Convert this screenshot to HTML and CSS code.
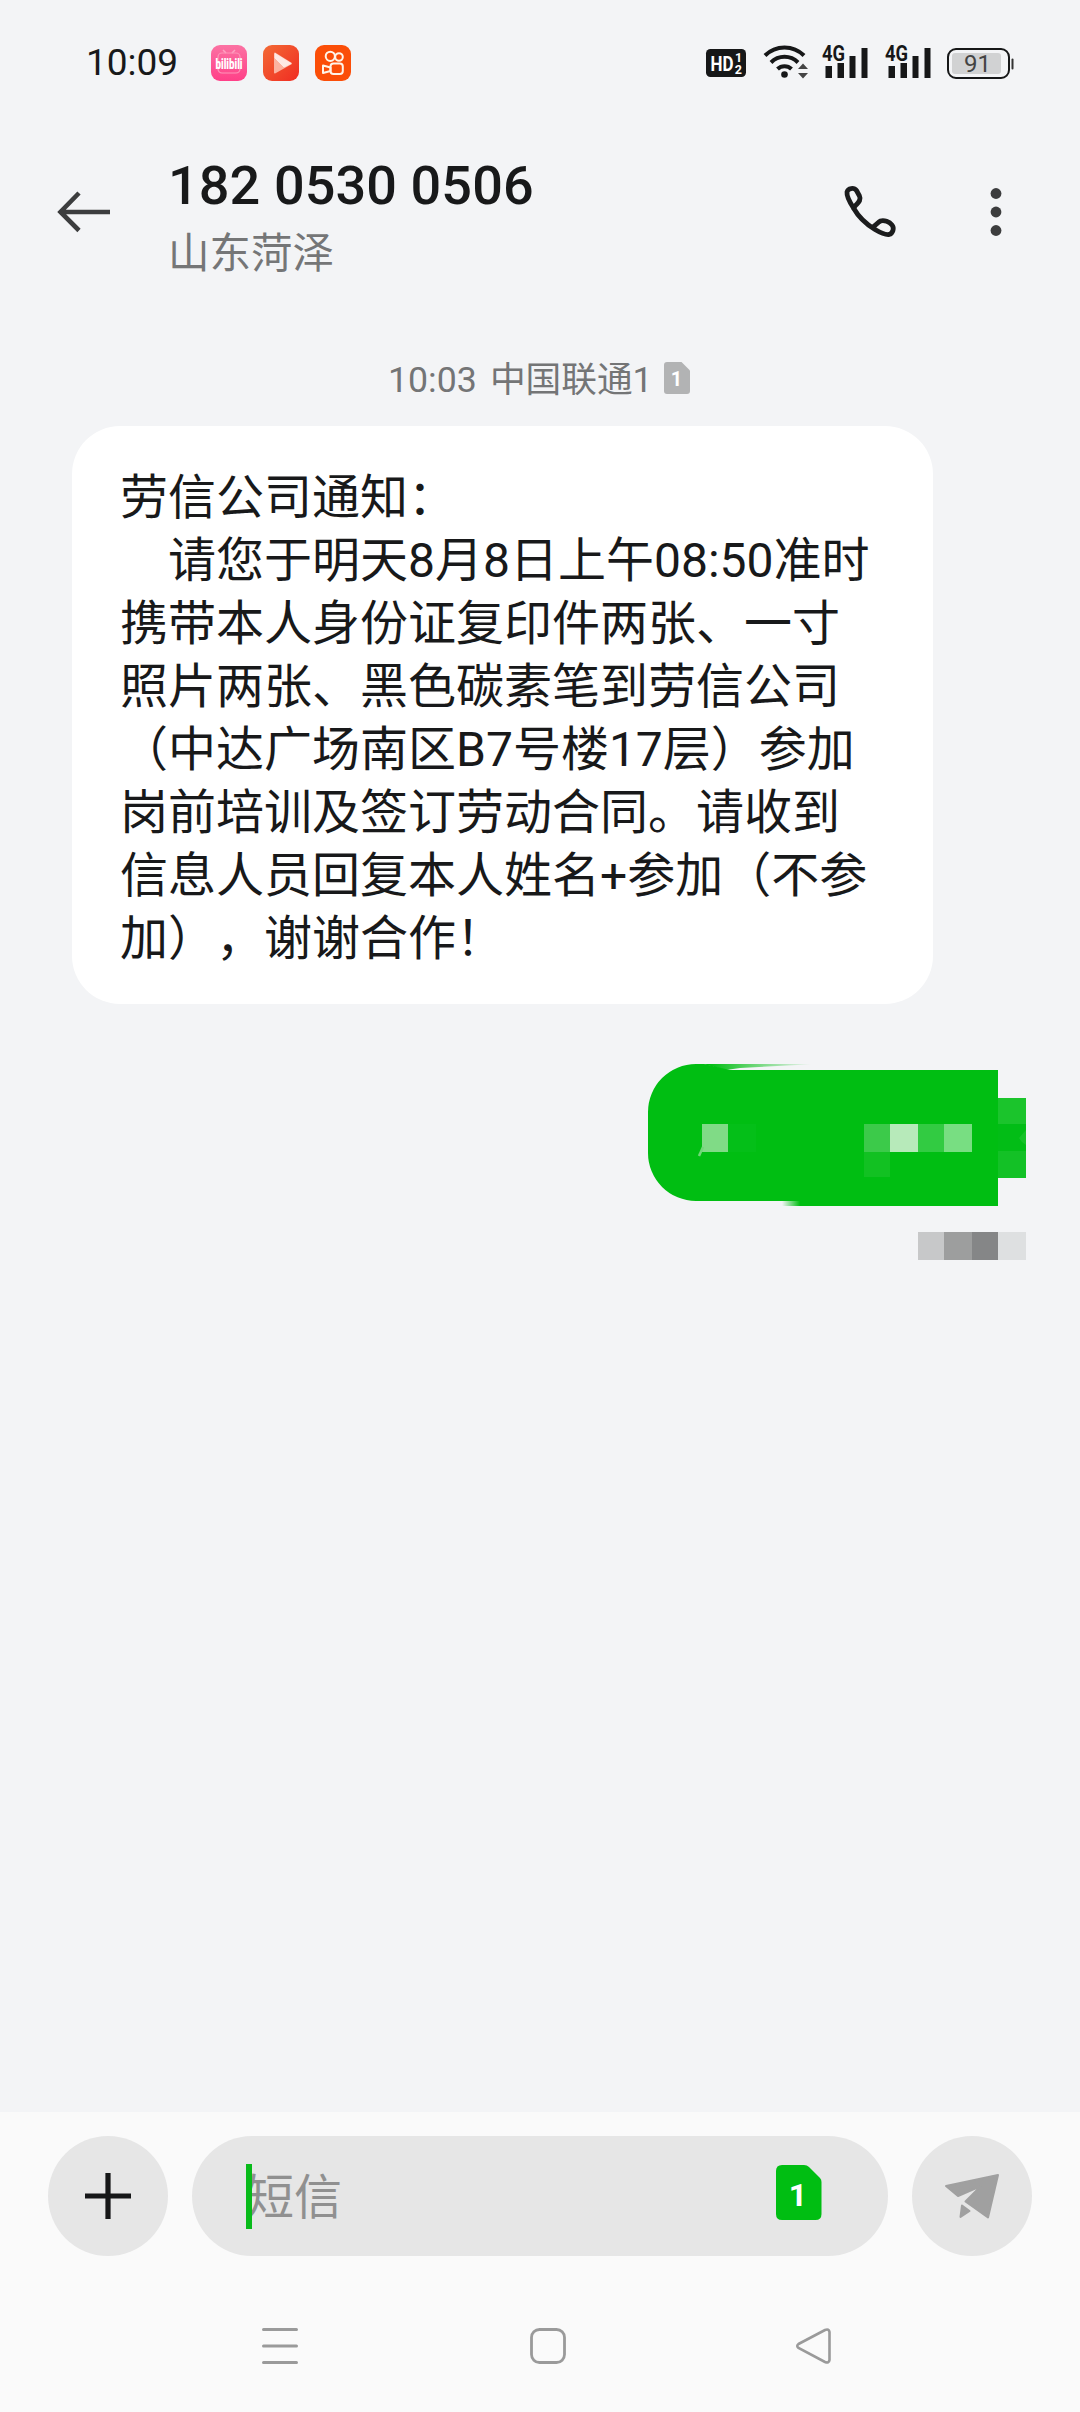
FILE: index.html
```html
<!DOCTYPE html>
<html lang="zh-CN">
<head>
<meta charset="utf-8">
<title>182 0530 0506</title>
<link rel="stylesheet" href="styles.css">
</head>
<body>
<div class="screen">
  <div class="status">
    <span class="clock">10:09</span>
    <div class="apps">
      <svg width="36" height="36" viewBox="0 0 36 36">
        <defs><linearGradient id="pink" x1="0" y1="0" x2="0" y2="1"><stop offset="0" stop-color="#fb72a3"/><stop offset="1" stop-color="#ff4088"/></linearGradient></defs>
        <rect width="36" height="36" rx="9" fill="url(#pink)"/>
        <path d="M12 5l3 3M24 5l-3 3" stroke="#fda3c2" stroke-width="1.5"/>
        <rect x="7" y="8" width="22" height="20" rx="4" fill="none" stroke="#fd94b8" stroke-width="1.2"/>
        <text class="bili" x="18" y="24" textLength="27" lengthAdjust="spacingAndGlyphs">bilibili</text>
      </svg>
      <svg width="36" height="36" viewBox="0 0 36 36">
        <defs><linearGradient id="red" x1="0" y1="0" x2="1" y2="1"><stop offset="0" stop-color="#f36a35"/><stop offset="1" stop-color="#f02c22"/></linearGradient></defs>
        <rect width="36" height="36" rx="9" fill="url(#red)"/>
        <path d="M12 8.500l16 10-16 9z" fill="#fbb3a0" stroke="#fbb3a0" stroke-width="2" stroke-linejoin="round"/>
        <path d="M12 8.500l16 10-7 3.500-9-9z" fill="#fee9e4" stroke="#fee9e4" stroke-width="1" stroke-linejoin="round"/>
      </svg>
      <svg width="36" height="36" viewBox="0 0 36 36">
        <rect width="36" height="36" rx="9" fill="#fb4e08"/>
        <g fill="none" stroke="#fff4e8" stroke-width="2" stroke-linejoin="round"><circle cx="15.300" cy="11.300" r="4.600"/><circle cx="24" cy="12" r="3.800"/><rect x="15.500" y="18.500" width="12.300" height="10.500" rx="3"/><path d="M15.500 22.500l-7.500-2v7.500l7.500-2z"/></g>
      </svg>
    </div>
    <div class="signals">
      <svg width="40" height="28" viewBox="0 0 40 28">
        <rect width="40" height="28" rx="4.500" fill="#161718"/>
        <text class="hd" x="4.500" y="22" textLength="23" lengthAdjust="spacingAndGlyphs">HD</text>
        <text class="hd-n" x="29" y="12.500">1</text><text class="hd-n" x="28.800" y="25.300">2</text>
      </svg>
      <svg class="wifi" width="46" height="35" viewBox="763 44 46 35">
        <g fill="none" stroke="#161718" stroke-width="4"><path d="M765 55.500a27.500 27.500 0 0 1 39 0"/><path d="M771 62.500a19 19 0 0 1 27 0"/><path d="M777.500 69a10 10 0 0 1 14 0"/></g>
        <circle cx="784.500" cy="74.500" r="3.300" fill="#161718"/>
        <path d="M798 69l5-5.500 5 5.500zM798 73h10l-5 5.500z" fill="#444"/>
      </svg>
      <svg class="cell" width="47" height="35" viewBox="0 0 47 35">
        <text class="g4" x="0" y="16.500" textLength="23" lengthAdjust="spacingAndGlyphs">4G</text>
        <path d="M3.500 22h6.500v12h-6.500zM15.500 19h6.500v15h-6.500zM27.500 12h6v22h-6zM39.500 4h6v30h-6z" fill="#161718"/>
      </svg>
      <svg class="cell" width="47" height="35" viewBox="0 0 47 35">
        <text class="g4" x="0" y="16.500" textLength="23" lengthAdjust="spacingAndGlyphs">4G</text>
        <path d="M3.500 22h6.500v12h-6.500zM15.500 19h6.500v15h-6.500zM27.500 12h6v22h-6zM39.500 4h6v30h-6z" fill="#161718"/>
      </svg>
      <svg width="67" height="31" viewBox="0 0 67 31">
        <rect x="1" y="1" width="61" height="29" rx="8" fill="none" stroke="#161718" stroke-width="2"/>
        <rect x="5" y="5" width="49" height="21" rx="3" fill="#d1d2d3"/>
        <rect x="64.500" y="10.500" width="2" height="11" rx="1" fill="#333"/>
        <text class="pct" x="30.500" y="24">91</text>
      </svg>
    </div>
  </div>

  <header class="header">
    <svg width="54" height="40" viewBox="57 192 54 40"><path d="M110 212H61M79 193L60.500 212l18.500 18.500" fill="none" stroke="#3c3d3e" stroke-width="4.600"/></svg>
    <div class="contact">
      <h1 class="number">182 0530 0506</h1>
      <div class="place">山东菏泽</div>
    </div>
    <svg class="phone" width="54" height="54" viewBox="843 185 54 54">
      <g fill="none" stroke="#1b1c1d" stroke-width="4.800" stroke-linejoin="round">
        <path d="M853.500 208C849 201 846.500 196 847 192c1-4 7-4.800 9.500-1.500l3 5.500c2 4-1 6.500-3.500 9z"/>
        <path d="M853.500 208C858 216 866 224 875 229.500c5 3 10 5.500 14 5 4-1 5.500-6.500 3-9.500-2.500-3-8-5.500-11.500-4-2.500 1.200-4 3.500-7 5.500"/>
      </g>
    </svg>
    <svg width="12" height="50" viewBox="990 187 12 50"><g fill="#3c3d3e"><circle cx="996" cy="193.500" r="5.400"/><circle cx="996" cy="212" r="5.400"/><circle cx="996" cy="230.500" r="5.400"/></g></svg>
  </header>

  <main class="thread">
    <div class="stamp">
      <span>10:03</span><span class="carrier">中国联通1</span>
      <svg width="26" height="32" viewBox="0 0 26 32"><path d="M3 0H17.500L26 8.500V29q0 3-3 3H3q-3 0-3-3V3q0-3 3-3z" fill="#b2b3b4"/><text class="sim-sm" x="12.500" y="23.500">1</text></svg>
    </div>
    <div class="bubble">劳信公司通知：<br>　请您于明天8月8日上午08:50准时<br>携带本人身份证复印件两张、一寸<br>照片两张、黑色碳素笔到劳信公司<br>（中达广场南区B7号楼17层）参加<br>岗前培训及签订劳动合同。请收到<br>信息人员回复本人姓名+参加（不参<br>加），谢谢合作！</div>
    <svg class="reply" width="378" height="197" viewBox="648 1064 378 197">
      <defs>
        <linearGradient id="fade" gradientUnits="userSpaceOnUse" x1="710" y1="1070" x2="812" y2="1064"><stop offset="0" stop-color="#00be12"/><stop offset="1" stop-color="#00be12" stop-opacity="0"/></linearGradient>
        <linearGradient id="edge" gradientUnits="userSpaceOnUse" x1="782" y1="0" x2="800" y2="0"><stop offset="0" stop-color="#00be12" stop-opacity="0"/><stop offset="1" stop-color="#00be12"/></linearGradient>
      </defs>
      <path d="M696 1064H704L730 1070H998V1206H800V1201H696A48 48 0 0 1 648 1153V1112A48 48 0 0 1 696 1064z" fill="#00be12"/>
      <path d="M703 1064H818L740 1068 726 1070z" fill="url(#fade)"/>
      <path d="M782 1201h18v5h-18z" fill="url(#edge)"/>
      <g shape-rendering="crispEdges">
        <path d="M998 1098h28v26h-28z" fill="#1bc42c"/><path d="M998 1124h28v27h-28z" fill="#02bd16"/><path d="M998 1151h28v27h-28z" fill="#13c126"/>
        <path d="M702 1124h26v28h-26z" fill="#80db86"/><path d="M728 1124h28v28h-28z" fill="#04bf18"/>
        <path d="M864 1124h26v28h-26z" fill="#3cca4a"/><path d="M890 1124h28v28h-28z" fill="#b7eaba"/><path d="M918 1124h26v28h-26z" fill="#32cb42"/><path d="M944 1124h28v28h-28z" fill="#78de82"/><path d="M864 1152h26v25h-26z" fill="#12c122"/>
        <path d="M918 1232h26v28h-26z" fill="#c7c8c9"/><path d="M944 1232h28v28h-28z" fill="#9d9e9e"/><path d="M972 1232h26v28h-26z" fill="#858687"/><path d="M998 1232h28v28h-28z" fill="#dee0e1"/>
      </g>
      <path d="M703 1147l-4 9" stroke="#70d878" stroke-width="2.500"/>
      <path d="M1026 1130v15q-5-3-7-7z" fill="#16c228"/>
    </svg>
  </main>

  <footer class="footer">
    <div class="composer">
      <div class="round"><svg width="46" height="46" viewBox="0 0 46 46"><path d="M23 0v46M0 23h46" stroke="#161718" stroke-width="5.200"/></svg></div>
      <div class="field">
        <span class="placeholder">短信<i class="caret"></i></span>
        <svg width="46" height="56" viewBox="0 0 46 56"><path d="M6 0H28q3 0 5 2L44 13q1.500 1.500 1.500 4V49q0 6-6 6H6q-6 0-6-6V6q0-6 6-6z" fill="#00be12"/><text class="sim-lg" x="22" y="40.500">1</text></svg>
      </div>
      <div class="round"><svg class="plane" width="56" height="48" viewBox="944 2174 56 48"><g fill="#a0a0a0" stroke="#a0a0a0" stroke-width="2" stroke-linejoin="round"><path d="M998 2176l-52 11 12 10 23-10-15.500 15.500 22.500 16z"/><path d="M962 2206.500l7.500 5.500-9 6z"/></g></svg></div>
    </div>
    <nav class="nav">
      <svg width="36" height="36" viewBox="0 0 36 36"><path d="M1.500 1.500h33M1.500 18h33M1.500 34.500h33" stroke="#9a9a9a" stroke-width="3" stroke-linecap="round"/></svg>
      <svg class="home" width="36" height="36" viewBox="0 0 36 36"><rect x="1.500" y="1.500" width="33" height="33" rx="8" fill="none" stroke="#9a9a9a" stroke-width="2.800"/></svg>
      <svg width="36" height="36" viewBox="0 0 36 36"><path d="M2.500 16L29 2q4-1.500 4.500 2v28q-.5 3.500-4.500 2L2.500 20q-2.500-2 0-4z" fill="none" stroke="#9a9a9a" stroke-width="2.600"/></svg>
    </nav>
  </footer>
</div>
</body>
</html>
```
FILE: styles.css
```css
* { box-sizing: border-box; }
body {
  margin: 0;
  background: #f3f4f6;
  font-family: Roboto, "Noto Sans CJK SC", sans-serif;
  color: #18191a;
  text-spacing-trim: space-all;
}
svg { display: block; flex: none; overflow: visible; }
.screen { width: 1080px; height: 2412px; display: flex; flex-direction: column; }

.status { height: 126px; padding: 0 66px 0 86px; display: flex; align-items: center; }
.clock { width: 125px; font-size: 37px; line-height: 40px; }
.apps { display: flex; gap: 16px; }
.signals { margin-left: auto; display: flex; align-items: center; gap: 16px; }
.wifi { margin-left: 1px; margin-top: -3px; }
.cell { margin-top: -3px; margin-left: -3px; }
.cell + .cell { margin-left: 0; margin-right: -1px; }
text { font-family: Roboto, sans-serif; }
.bili { font-size: 14px; font-weight: 900; fill: #fff; text-anchor: middle; }
.hd { font-size: 21px; font-weight: 700; fill: #fff; }
.hd-n { font-size: 12.5px; font-weight: 700; fill: #fff; }
.g4 { font-size: 22px; font-weight: 700; fill: #161718; }
.pct { font-size: 24px; fill: #444; text-anchor: middle; }
.sim-sm { font-size: 20px; font-weight: 700; fill: #fff; text-anchor: middle; }
.sim-lg { font-size: 32px; font-weight: 700; fill: #fff; text-anchor: middle; }

.header { height: 172px; padding: 0 78px 0 57px; display: flex; align-items: center; }
.contact { margin-left: 57px; margin-top: 12px; }
.number { margin: 0; font-size: 54px; line-height: 70px; font-weight: 500; letter-spacing: .1px; white-space: nowrap; }
.place { margin-top: 1px; font-size: 41.5px; line-height: 64px; color: #757677; }
.phone { margin-left: auto; margin-right: 93px; }

.thread { flex: 1; display: flex; flex-direction: column; }
.stamp { height: 128px; padding: 57px 0 0 388px; display: flex; align-items: flex-start; font-size: 35.7px; line-height: 50px; color: #747576; }
.stamp .carrier { margin-left: 13px; margin-right: 11px; }
.stamp svg { margin-top: 7px; }
.bubble {
  align-self: flex-start;
  width: 861px; height: 578px;
  margin-left: 72px;
  padding: 40px 0 0 48px;
  border-radius: 48px;
  background: #fff;
  font-size: 48px; line-height: 63px;
  white-space: nowrap;
}
.reply { margin: 60px 0 0 648px; }

.footer { height: 300px; background: #fafafa; }
.composer { padding: 24px 48px 0; display: flex; gap: 24px; }
.round { width: 120px; height: 120px; border-radius: 50%; background: #e6e6e6; display: flex; align-items: center; justify-content: center; }
.plane { margin-top: 2px; }
.field { flex: 1; height: 120px; padding: 0 66px 0 54px; border-radius: 60px; background: #e6e6e6; display: flex; align-items: center; justify-content: space-between; }
.field svg { margin-top: -6px; }
.placeholder { position: relative; padding-top: 3px; font-size: 48px; line-height: 64px; color: #909090; }
.caret { position: absolute; left: 0; top: 1px; width: 6px; height: 65px; background: #08bb1a; }
.nav { padding: 72px 248px 0 262px; display: flex; justify-content: space-between; }
.home { margin-left: 2px; }
```
